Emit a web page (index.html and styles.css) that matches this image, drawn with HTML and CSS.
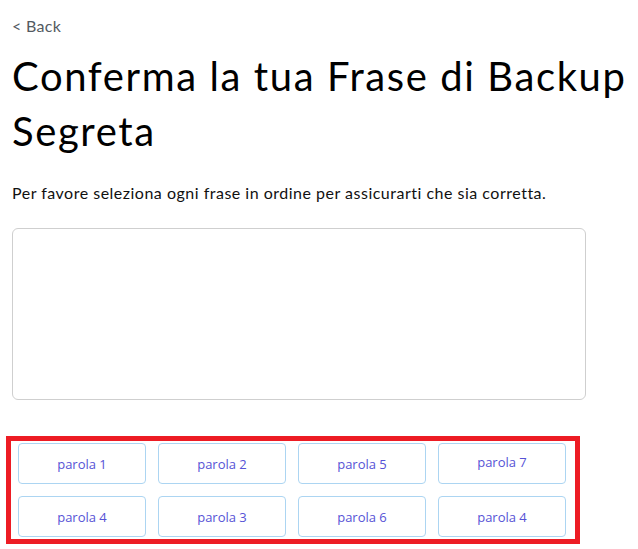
FILE: index.html
```html
<!DOCTYPE html>
<html lang="it">
<head>
<meta charset="utf-8">
<title>Conferma la tua Frase di Backup Segreta</title>
<link rel="stylesheet" href="styles.css">
</head>
<body>
<main class="page">
  <a class="back" href="#">&lt; Back</a>
  <h1 class="title">Conferma la tua Frase di Backup Segreta</h1>
  <p class="intro">Per favore seleziona ogni frase in ordine per assicurarti che sia corretta.</p>
  <div class="drop-area"></div>
  <div class="word-box">
    <div class="words">
      <button class="word">parola 1</button>
      <button class="word">parola 2</button>
      <button class="word">parola 5</button>
      <button class="word word-high">parola 7</button>
      <button class="word">parola 4</button>
      <button class="word">parola 3</button>
      <button class="word">parola 6</button>
      <button class="word">parola 4</button>
    </div>
  </div>
</main>
</body>
</html>
```

FILE: styles.css
```css
html, body {
  margin: 0;
  padding: 0;
  background: #ffffff;
}

.page {
  display: flex;
  flex-direction: column;
  align-items: flex-start;
  padding: 16px 0 0 12px;
  font-family: Lato, "Open Sans", sans-serif;
  color: #000;
}

.back {
  font-size: 16px;
  line-height: 20px;
  letter-spacing: 0.3px;
  color: #535a61;
  text-decoration: none;
}

.title {
  margin: 13px 0 0 0;
  font-size: 40px;
  line-height: 55px;
  letter-spacing: 1.6px;
  font-weight: 400;
  color: #000;
}

.intro {
  margin: 24px 0 0 0;
  font-size: 16px;
  line-height: 20px;
  letter-spacing: 0.5px;
  color: #111;
}

.drop-area {
  margin-top: 25px;
  width: 572px;
  height: 170px;
  border: 1px solid #cfcfcf;
  border-radius: 6px;
}

.word-box {
  margin: 36px 0 0 -6px;
  width: 557px;
  height: 96px;
  border: 5px solid #ed1c24;
  padding: 2px 0 0 7px;
  box-sizing: content-box;
}

.words {
  display: grid;
  grid-template-columns: repeat(4, 128px);
  grid-auto-rows: 41px;
  column-gap: 12px;
  row-gap: 12px;
}

.word {
  margin: 0;
  padding: 0;
  background: #fff;
  border: 1px solid #acd5f2;
  border-radius: 4px;
  font-family: "Open Sans", sans-serif;
  font-size: 13px;
  color: #5652d6;
  cursor: pointer;
}

.word-high {
  padding-bottom: 4px;
}
```
